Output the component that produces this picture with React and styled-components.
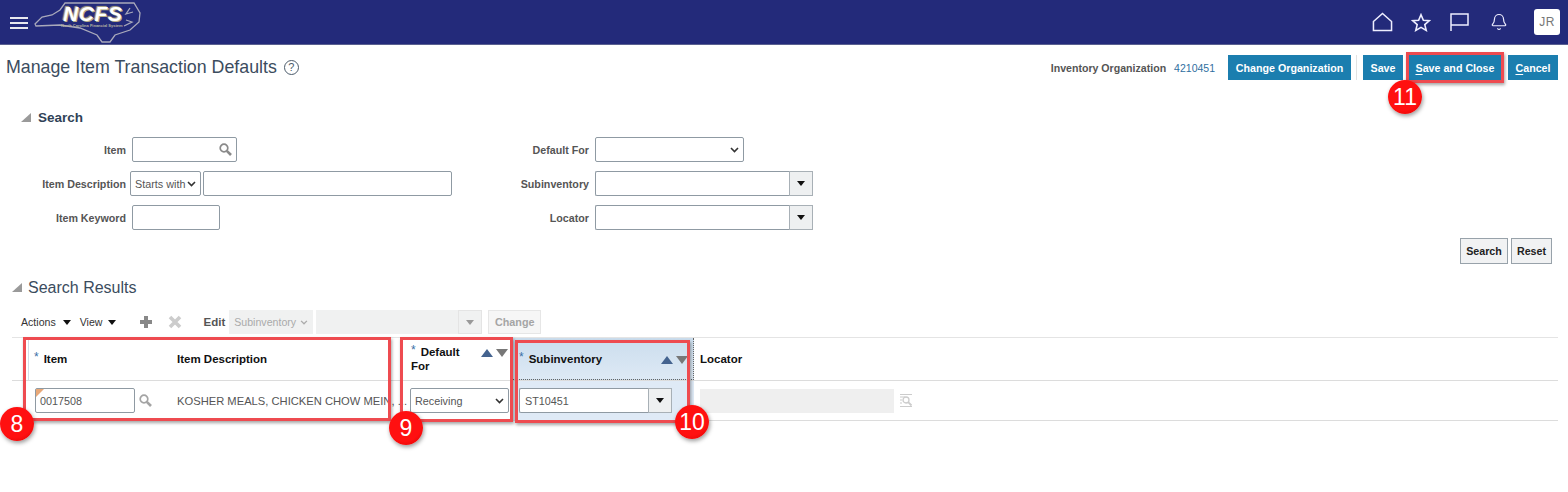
import styled, { createGlobalStyle } from 'styled-components';
import { Bell } from 'lucide-react';

const GlobalStyle = createGlobalStyle`
  html, body {
    margin: 0;
    padding: 0;
    background: #fff;
  }
  body {
    font-family: 'Liberation Sans', Arial, sans-serif;
    color: #333;
  }
`;

const Page = styled.div`
  position: relative;
  width: 1568px;
  height: 492px;
  overflow: hidden;
`;

const Header = styled.header`
  height: 44px;
  background: #232a7a;
  border-bottom: 1px solid #5a6090;
  display: flex;
  align-items: center;
  padding: 0 8px 0 10px;
`;
const Burger = styled.div`
  display: flex;
  flex-direction: column;
  gap: 3px;
  width: 18px;
  margin-top: 1px;
  span {
    height: 2px;
    background: #e8e8ee;
  }
`;
const LogoBox = styled.div`
  position: relative;
  width: 108px;
  height: 44px;
  margin-left: 6px;
`;
const LogoText = styled.span`
  position: absolute;
  left: 29px;
  top: 2px;
  font: italic 700 21px 'Liberation Sans', sans-serif;
  letter-spacing: 0.6px;
  color: #fff;
  text-shadow: 1px 1px 0 #b8ae88, -1px -1px 1px #b8ae88;
`;
const LogoSub = styled.span`
  position: absolute;
  left: 27px;
  top: 23px;
  font: 700 4px 'Liberation Sans', sans-serif;
  white-space: nowrap;
  color: #b8b4a4;
`;
const HeaderIcons = styled.div`
  margin-left: auto;
  display: flex;
  align-items: center;
  color: #eef;
`;
const IconSlot = styled.span`
  display: flex;
  width: ${(pr) => pr.w}px;
`;
const Avatar = styled.div`
  width: 26px;
  height: 26px;
  border-radius: 3px;
  background: #fff;
  color: #777;
  font-size: 12px;
  letter-spacing: 0.5px;
  display: flex;
  align-items: center;
  justify-content: center;
`;

const TitleRow = styled.div`
  height: 45px;
  display: flex;
  align-items: center;
  padding: 0 10px 0 6px;
`;
const Title = styled.h1`
  margin: 0;
  font-size: 17.8px;
  font-weight: 400;
  color: #3b4c5e;
`;
const Help = styled.span`
  width: 13px;
  height: 13px;
  margin-left: 7px;
  border: 1px solid #4a5a6a;
  border-radius: 50%;
  color: #4a5a6a;
  font-size: 11px;
  line-height: 13px;
  text-align: center;
`;
const OrgLabel = styled.span`
  margin-left: auto;
  font-size: 10.6px;
  font-weight: 700;
  color: #555;
`;
const OrgValue = styled.span`
  margin-left: 8px;
  margin-right: 13px;
  font-size: 10.5px;
  color: #2f6f9f;
`;
const Primary = styled.button`
  height: 25px;
  width: ${(pr) => pr.w}px;
  margin-left: ${(pr) => pr.ml || 0}px;
  padding: 0;
  border: none;
  background: #1b7eaf;
  color: #fff;
  font: 700 10.7px 'Liberation Sans', sans-serif;
  u {
    text-underline-offset: 2px;
  }
`;
const Divider = styled.span`
  width: 1px;
  height: 25px;
  margin: 0 6px 0 5px;
  background: #e2e2e2;
`;

const Section = styled.section`
  padding: 19px 16px 0 21px;
`;
const SectionHead = styled.div`
  display: flex;
  align-items: center;
  gap: 7px;
  height: 16px;
`;
const Disclosure = styled.span`
  width: 0;
  height: 0;
  border-style: solid;
  border-width: 0 0 9px 10px;
  border-color: transparent transparent #9a9a9a transparent;
`;
const SearchTitle = styled.h2`
  margin: 0;
  font-size: 13.5px;
  font-weight: 700;
  color: #2f4257;
`;
const FormGrid = styled.div`
  display: flex;
  margin-top: 12px;
`;
const FormCol = styled.div`
  width: ${(pr) => pr.w}px;
  display: flex;
  flex-direction: column;
  gap: 9px;
`;
const FormRow = styled.div`
  display: flex;
  align-items: center;
  height: 25px;
`;
const Label = styled.label`
  width: ${(pr) => pr.w}px;
  margin-right: ${(pr) => pr.mr}px;
  text-align: right;
  font-size: 10.7px;
  font-weight: 700;
  color: #555;
`;
const InputBox = styled.div`
  position: relative;
  box-sizing: border-box;
  display: flex;
  align-items: center;
  height: ${(pr) => pr.h || 25}px;
  width: ${(pr) => pr.w}px;
  margin-left: ${(pr) => pr.ml || 0}px;
  padding: 0 4px;
  border: 1px solid #8f9aa3;
  border-radius: 2px;
  background: ${(pr) => pr.bg || '#fff'};
  font-size: 10.8px;
  white-space: nowrap;
  color: #555;
`;
const Chevron = () => (
  <svg width="9" height="6" viewBox="0 0 9 6" style={{ marginLeft: 'auto', flex: 'none' }}>
    <path d="M1 1l3.5 3.5L8 1" fill="none" stroke="#333" strokeWidth="1.6" />
  </svg>
);
const Magnifier = ({ color = '#8a8a8a', pushed }) => (
  <svg width="13" height="13" viewBox="0 0 13 13" style={pushed ? { marginLeft: 'auto' } : { marginLeft: 4 }}>
    <circle cx="5" cy="5" r="3.8" fill="none" stroke={color} strokeWidth="1.7" />
    <path d="M7.8 7.8L12 12" stroke={color} strokeWidth="2.6" />
  </svg>
);
const LocatorIcon = () => (
  <svg width="14" height="15" viewBox="0 0 14 15" style={{ marginLeft: 5 }}>
    <path d="M1 1.5h12M1 4h5M1 7h2M1 10h2M1 13.5h12" stroke="#ccc" strokeWidth="1.2" fill="none" />
    <circle cx="7" cy="7" r="3" fill="none" stroke="#ccc" strokeWidth="1.3" />
    <path d="M9.2 9.2L12.5 12.5" stroke="#ccc" strokeWidth="1.8" />
  </svg>
);
const Combo = styled.div`
  display: flex;
  box-sizing: border-box;
  width: ${(pr) => pr.w}px;
  height: 25px;
`;
const ComboInput = styled.div`
  flex: 1;
  box-sizing: border-box;
  padding: 0 5px;
  display: flex;
  align-items: center;
  font-size: 10.8px;
  color: #555;
  background: #fff;
  border: 1px solid #8f9aa3;
  border-right: none;
  border-radius: 2px 0 0 2px;
`;
const ComboButton = styled.div`
  width: 24px;
  box-sizing: border-box;
  display: flex;
  align-items: center;
  justify-content: center;
  border: 1px solid #a8b0b6;
  background: #eef0f1;
`;
const DownArrow = styled.span`
  width: 0;
  height: 0;
  border-style: solid;
  border-width: 5px 4px 0;
  border-color: ${(pr) => pr.color || '#111'} transparent transparent;
`;
const ButtonRow = styled.div`
  display: flex;
  justify-content: flex-end;
  gap: 3px;
  margin-top: 8px;
`;
const GreyButton = styled.button`
  height: 26px;
  width: ${(pr) => pr.w}px;
  padding: 0;
  border: 1px solid #98a2aa;
  background: #f1f2f3;
  color: #222;
  font: 700 10.7px 'Liberation Sans', sans-serif;
`;

const Results = styled.section`
  margin-top: 13px;
  padding: 0 10px 0 12px;
`;
const ResultsHead = styled.div`
  display: flex;
  align-items: center;
  gap: 6px;
  height: 20px;
`;
const ResultsTitle = styled.h2`
  margin: 1px 0 0;
  font-size: 16px;
  font-weight: 400;
  color: #3b4c5e;
`;
const Toolbar = styled.div`
  display: flex;
  align-items: center;
  height: 24px;
  margin-top: 13px;
  padding-left: 9px;
  font-size: 10.6px;
  color: #333;
`;
const ToolMenu = styled.span`
  display: flex;
  align-items: center;
  gap: ${(pr) => pr.gap}px;
  margin-right: ${(pr) => pr.mr}px;
`;
const ToolIcon = styled.svg`
  width: 14px;
  height: 14px;
  margin-right: ${(pr) => pr.mr}px;
`;
const EditLabel = styled.span`
  margin-right: 4px;
  font-size: 11.5px;
  font-weight: 700;
  color: #555;
`;
const DisabledField = styled.div`
  display: flex;
  align-items: center;
  box-sizing: border-box;
  height: 24px;
  width: ${(pr) => pr.w}px;
  margin-left: ${(pr) => pr.ml || 0}px;
  padding: 0 5px;
  background: #f0f1f1;
  font-size: 10.6px;
  color: #aaa;
`;
const DisabledArrow = styled.span`
  margin: 0 -5px 0 auto;
  box-sizing: border-box;
  width: 24px;
  height: 24px;
  display: flex;
  align-items: center;
  justify-content: center;
  border: 1px solid #e4e4e4;
`;
const ChangeButton = styled.button`
  height: 24px;
  width: 53px;
  margin-left: 6px;
  padding: 0;
  border: 1px solid #e6e6e6;
  background: #f6f6f6;
  color: #a5a5a5;
  font: 700 10.8px 'Liberation Sans', sans-serif;
`;

const columns = '16px 149px 223px 113px 181px 1fr';
const HeadRow = styled.div`
  display: grid;
  grid-template-columns: ${columns};
  height: 44px;
  margin-top: 3px;
  box-sizing: border-box;
  border-top: 1px solid #e4e4e4;
  border-bottom: 1px solid #dcdcdc;
`;
const BodyRow = styled.div`
  display: grid;
  grid-template-columns: ${columns};
  height: 40px;
  box-sizing: border-box;
  border-bottom: 1px solid #dcdcdc;
`;
const HeadCell = styled.div`
  position: relative;
  display: flex;
  align-items: center;
  padding-left: ${(pr) => pr.pl || 0}px;
  font-size: 11.5px;
  font-weight: 700;
  line-height: 14px;
  color: #111;
  background: ${(pr) => (pr.active ? 'linear-gradient(#cbdded, #dde9f5)' : 'transparent')};
  border-left: ${(pr) => (pr.first ? '1px solid #d3dde7' : 'none')};
  border-right: ${(pr) => (pr.active ? '1px dotted #666' : 'none')};
  border-bottom: ${(pr) => (pr.active ? '1px dotted #666' : 'none')};
`;
const Cell = styled.div`
  display: flex;
  align-items: center;
  padding-left: ${(pr) => pr.pl || 0}px;
  font-size: 11.2px;
  color: #555;
  white-space: nowrap;
  background: ${(pr) => (pr.active ? '#dfeaf6' : 'transparent')};
`;
const Required = styled.span`
  position: relative;
  top: -2px;
  color: #3a6ea5;
  font-size: 12px;
  font-weight: 400;
  margin-right: 5px;
`;
const SortIcons = styled.span`
  position: absolute;
  right: 5px;
  top: ${(pr) => pr.top}px;
  display: flex;
  gap: 3px;
`;
const SortTri = styled.span`
  width: 0;
  height: 0;
  border-style: solid;
  border-width: ${(pr) => (pr.up ? '0 6.5px 8px' : '8px 6.5px 0')};
  border-color: ${(pr) => (pr.up ? 'transparent transparent #44638f' : '#777 transparent transparent')};
`;
const Corner = styled.span`
  position: absolute;
  left: 0;
  top: 0;
  border-style: solid;
  border-width: 8px 8px 0 0;
  border-color: #e8a878 transparent transparent transparent;
`;
const LocatorField = styled.div`
  width: 194px;
  height: 24px;
  background: #efefef;
`;

const RedBox = styled.div`
  position: absolute;
  left: ${(pr) => pr.x}px;
  top: ${(pr) => pr.y}px;
  width: ${(pr) => pr.w}px;
  height: ${(pr) => pr.h}px;
  box-sizing: border-box;
  border: 3px solid #ee4b50;
  box-shadow: 1px 2px 3px rgba(0, 0, 0, 0.35);
`;
const Badge = styled.div`
  position: absolute;
  left: ${(pr) => pr.x - 17}px;
  top: ${(pr) => pr.y - 17}px;
  width: 34px;
  height: 34px;
  border-radius: 50%;
  background: radial-gradient(circle at 45% 40%, #ff1010 60%, #d80000);
  box-shadow: 1px 2px 4px rgba(0, 0, 0, 0.4);
  color: #fff;
  font-size: 23px;
  display: flex;
  align-items: center;
  justify-content: center;
`;

const App = () => (
  <Page>
    <GlobalStyle />
    <Header>
      <Burger>
        <span />
        <span />
        <span />
      </Burger>
      <LogoBox>
        <svg width="108" height="44" viewBox="0 0 108 44" fill="none" stroke="#a9a9bb" strokeWidth="1.3">
          <path d="M1 24 L8 17 L18 15 L26 10 L31 3 L100 3 L106 13 L105 22 L96 30 L81 35 L76 42 L68 42 L63 35 L46 28 L26 25 L2 26 Z" />
          <path d="M96 8 L92 14 L99 12 M92 20 L98 22 L90 26" />
        </svg>
        <LogoText>NCFS</LogoText>
        <LogoSub>North Carolina Financial System</LogoSub>
      </LogoBox>
      <HeaderIcons>
        <IconSlot w={39}>
          <svg width="21" height="20" viewBox="0 0 22 21" fill="none" stroke="#eef" strokeWidth="1.6">
            <path d="M1.5 10 L11 1.5 L20.5 10 V19.5 H1.5 Z" />
          </svg>
        </IconSlot>
        <IconSlot w={39}>
          <svg width="20" height="19" viewBox="0 0 21 20" fill="none" stroke="#eef" strokeWidth="1.7">
            <path d="M10.5 1.8 L13 7.6 L19.3 8.1 L14.5 12.2 L16 18.3 L10.5 15.1 L5 18.3 L6.5 12.2 L1.7 8.1 L8 7.6 Z" />
          </svg>
        </IconSlot>
        <IconSlot w={40}>
          <svg width="19" height="18" viewBox="0 0 19 18" fill="none" stroke="#eef" strokeWidth="1.5">
            <path d="M1 18 V1 H18 V12 H1" />
          </svg>
        </IconSlot>
        <IconSlot w={44}><Bell size={18} strokeWidth={1.6} /></IconSlot>
        <Avatar>JR</Avatar>
      </HeaderIcons>
    </Header>

    <TitleRow>
      <Title>Manage Item Transaction Defaults</Title>
      <Help>?</Help>
      <OrgLabel>Inventory Organization</OrgLabel>
      <OrgValue>4210451</OrgValue>
      <Primary w={123}>Change Organization</Primary>
      <Divider />
      <Primary w={40}>Save</Primary>
      <Primary w={94} ml={5}><u>S</u>ave and Close</Primary>
      <Primary w={50} ml={6}><u>C</u>ancel</Primary>
    </TitleRow>

    <Section>
      <SectionHead>
        <Disclosure />
        <SearchTitle>Search</SearchTitle>
      </SectionHead>
      <FormGrid>
        <FormCol w={474}>
          <FormRow>
            <Label w={105} mr={6}>Item</Label>
            <InputBox w={105}>
              <Magnifier pushed />
            </InputBox>
          </FormRow>
          <FormRow>
            <Label w={105} mr={4}>Item Description</Label>
            <InputBox w={71}>Starts with<Chevron /></InputBox>
            <InputBox w={249} ml={2} />
          </FormRow>
          <FormRow>
            <Label w={105} mr={6}>Item Keyword</Label>
            <InputBox w={88} />
          </FormRow>
        </FormCol>
        <FormCol w={320}>
          <FormRow>
            <Label w={94} mr={6}>Default For</Label>
            <InputBox w={149}><Chevron /></InputBox>
          </FormRow>
          <FormRow>
            <Label w={94} mr={6}>Subinventory</Label>
            <Combo w={218}>
              <ComboInput />
              <ComboButton><DownArrow /></ComboButton>
            </Combo>
          </FormRow>
          <FormRow>
            <Label w={94} mr={6}>Locator</Label>
            <Combo w={218}>
              <ComboInput />
              <ComboButton><DownArrow /></ComboButton>
            </Combo>
          </FormRow>
        </FormCol>
      </FormGrid>
      <ButtonRow>
        <GreyButton w={48}>Search</GreyButton>
        <GreyButton w={41}>Reset</GreyButton>
      </ButtonRow>
    </Section>

    <Results>
      <ResultsHead>
        <Disclosure />
        <ResultsTitle>Search Results</ResultsTitle>
      </ResultsHead>
      <Toolbar>
        <ToolMenu gap={7} mr={9}>Actions <DownArrow /></ToolMenu>
        <ToolMenu gap={5} mr={23}>View <DownArrow /></ToolMenu>
        <ToolIcon viewBox="0 0 14 14" mr={15}>
          <path d="M7 1v12M1 7h12" stroke="#888" strokeWidth="4" />
        </ToolIcon>
        <ToolIcon viewBox="0 0 14 14" mr={22}>
          <path d="M2 2l10 10M12 2L2 12" stroke="#ccc" strokeWidth="3.6" />
        </ToolIcon>
        <EditLabel>Edit</EditLabel>
        <DisabledField w={84}>
          Subinventory
          <svg width="8" height="5" viewBox="0 0 9 6" style={{ marginLeft: 'auto' }}>
            <path d="M1 1l3.5 3.5L8 1" fill="none" stroke="#aaa" strokeWidth="1.5" />
          </svg>
        </DisabledField>
        <DisabledField w={166} ml={3}>
          <DisabledArrow><DownArrow color="#999" /></DisabledArrow>
        </DisabledField>
        <ChangeButton>Change</ChangeButton>
      </Toolbar>

      <HeadRow>
        <div />
        <HeadCell first pl={5}><Required>*</Required>Item</HeadCell>
        <HeadCell>Item Description</HeadCell>
        <HeadCell pl={11}>
          <span><Required>*</Required>Default<br />For</span>
          <SortIcons top={11}><SortTri up /><SortTri /></SortIcons>
        </HeadCell>
        <HeadCell active pl={6}>
          <Required>*</Required>Subinventory
          <SortIcons top={18}><SortTri up /><SortTri /></SortIcons>
        </HeadCell>
        <HeadCell pl={6}>Locator</HeadCell>
      </HeadRow>
      <BodyRow>
        <div />
        <Cell pl={7}>
          <InputBox w={100} h={25}><Corner />0017508</InputBox>
          <Magnifier color="#a4a4a4" />
        </Cell>
        <Cell>KOSHER MEALS, CHICKEN CHOW MEIN, ...</Cell>
        <Cell pl={10}>
          <InputBox w={99}>Receiving<Chevron /></InputBox>
        </Cell>
        <Cell active pl={6}>
          <Combo w={153}>
            <ComboInput>ST10451</ComboInput>
            <ComboButton><DownArrow /></ComboButton>
          </Combo>
        </Cell>
        <Cell pl={6}>
          <LocatorField />
          <LocatorIcon />
        </Cell>
      </BodyRow>
    </Results>

    <RedBox x={23} y={337} w={368} h={84} />
    <RedBox x={400} y={337} w={113} h={85} />
    <RedBox x={515} y={340} w={175} h={83} />
    <RedBox x={1406} y={52} w={98} h={31} />
    <Badge x={17} y={424}>8</Badge>
    <Badge x={406} y={428}>9</Badge>
    <Badge x={692} y={422}>10</Badge>
    <Badge x={1405} y={97}>11</Badge>
  </Page>
);

export default App;
